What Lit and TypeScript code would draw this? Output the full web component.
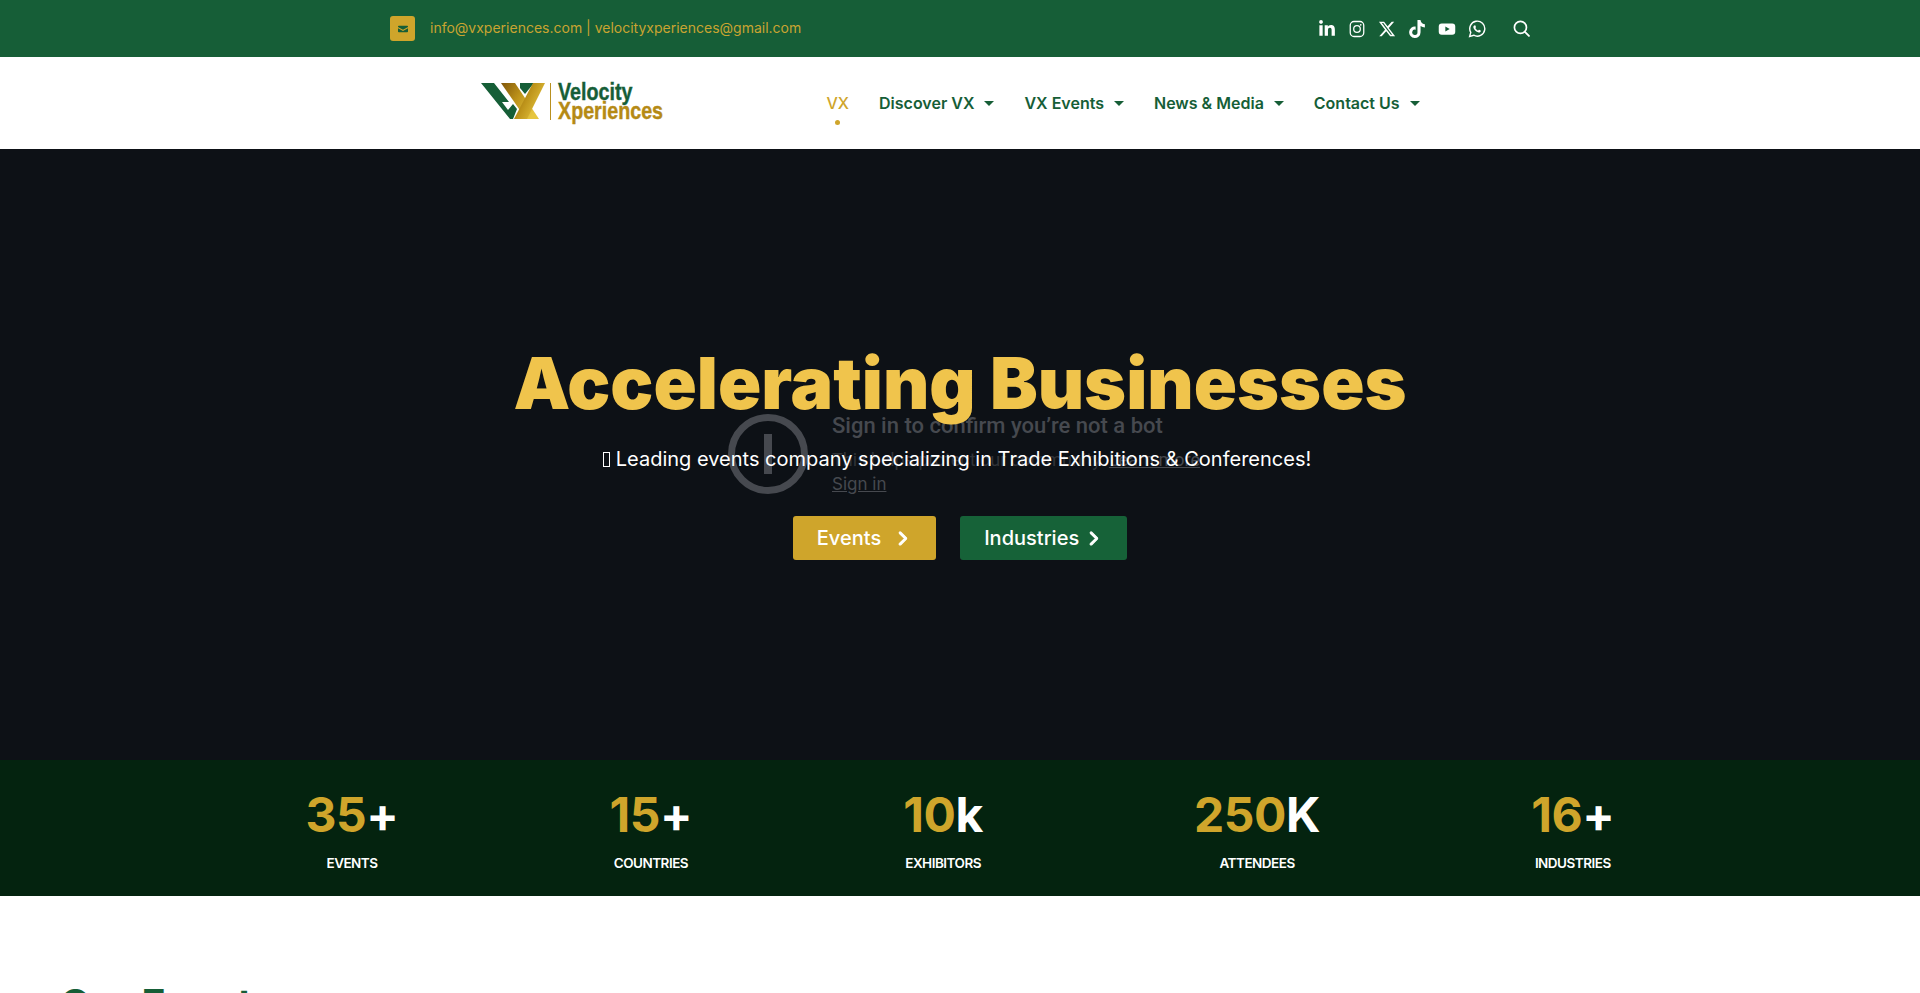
import { LitElement, html, css, svg } from "lit";
import { customElement } from "lit/decorators.js";

const ICONS = [
  { vb: "0 0 448 512", d: "M100.28 448H7.4V148.9h92.88zM53.79 108.1C24.09 108.1 0 83.5 0 53.8a53.79 53.79 0 0 1 107.58 0c0 29.7-24.1 54.3-53.79 54.3zM447.9 448h-92.68V302.4c0-34.7-.7-79.2-48.29-79.2-48.29 0-55.69 37.7-55.69 76.7V448h-92.78V148.9h89.08v40.8h1.3c12.4-23.5 42.69-48.3 87.88-48.3 94 0 111.28 61.9 111.28 142.3V448z" },
  { vb: "0 0 24 24", raw: svg`<rect x="3" y="2" width="18" height="20" rx="5" fill="none" stroke="currentColor" stroke-width="1.7"/><circle cx="12" cy="12" r="4.4" fill="none" stroke="currentColor" stroke-width="1.7"/><circle cx="17" cy="6.4" r="1.15" fill="currentColor"/>` },
  { vb: "0 0 512 512", d: "M389.2 48h70.6L305.6 224.2 487 464H345L233.7 318.6 106.5 464H35.8L200.7 275.5 26.8 48H172.4L272.9 180.9 389.2 48zM364.4 421.8h39.1L151.1 88h-42L364.4 421.8z" },
  { vb: "0 0 448 512", d: "M448,209.91a210.06,210.06,0,0,1-122.77-39.25V349.38A162.55,162.55,0,1,1,185,188.31V278.2a74.62,74.62,0,1,0,52.23,71.18V0l88,0a121.18,121.18,0,0,0,1.86,22.17h0A122.18,122.18,0,0,0,381,102.39a121.43,121.43,0,0,0,67,20.14Z" },
  { vb: "0 0 24 24", raw: svg`<path fill="currentColor" fill-rule="evenodd" d="M5 4.5h14a4 4 0 0 1 4 4v7a4 4 0 0 1-4 4H5a4 4 0 0 1-4-4v-7a4 4 0 0 1 4-4zM9.8 8.6v6.8l5.8-3.4z"/>` },
  { vb: "0 0 24 24", raw: svg`<path fill="none" stroke="currentColor" stroke-width="1.9" d="M2.2 21.8l1.5-5.3A10 10 0 1 1 7.6 20.3z"/><path fill="currentColor" d="M8.6 7.2c.4-.3 1-.3 1.2.2l.8 1.8c.1.3 0 .6-.2.8l-.7.8c.8 1.5 2 2.6 3.6 3.4l.9-1c.2-.3.5-.3.8-.2l1.8.9c.4.2.5.6.3 1-.5 1.2-1.5 1.9-2.8 1.7-3.6-.6-6.6-3.4-7.2-6.8-.2-1.2.5-2 1.5-2.6z"/>` },
];

const CHEV = svg`<path fill="currentColor" stroke="currentColor" stroke-width="36" d="M310.6 233.4c12.5 12.5 12.5 32.8 0 45.3l-192 192c-12.5 12.5-32.8 12.5-45.3 0s-12.5-32.8 0-45.3L242.7 256 73.4 86.6c-12.5-12.5-12.5-32.8 0-45.3s32.8-12.5 45.3 0l192 192z"/>`;

const NAV = ["Discover VX", "VX Events", "News & Media", "Contact Us"];
const STATS = [
  ["35", "+", "EVENTS"],
  ["15", "+", "COUNTRIES"],
  ["10", "k", "EXHIBITORS"],
  ["250", "K", "ATTENDEES"],
  ["16", "+", "INDUSTRIES"],
];

@customElement("app-root")
export class AppRoot extends LitElement {
  static styles = css`
    :host { display: block; height: 993px; overflow: hidden; background: #fff; font-family: Inter, "Liberation Sans", sans-serif; }
    .top { height: 57px; background: #165e37; display: flex; align-items: center; padding: 0 390px; box-sizing: border-box; }
    .mail { width: 25px; height: 25px; border-radius: 3px; background: #cfa52b; display: flex; align-items: center; justify-content: center; margin-right: 15px; }
    .mail svg { width: 10px; height: 10px; }
    .addr { font-size: 14px; line-height: 18px; color: #c9a431; flex: 1; margin-bottom: 2px; }
    .social { display: flex; gap: 12px; align-items: center; color: #fff; margin-right: 27px; }
    .social svg { width: 18px; height: 18px; display: block; }
    .search { width: 17px; height: 17px; color: #fff; display: block; }
    .nav { height: 92px; display: flex; align-items: center; box-sizing: border-box; padding-left: 481px; background: #fff; }
    .logo { display: flex; align-items: flex-start; width: 345.5px; height: 40px; }
    .logo svg { width: 64px; height: 37px; display: block; flex: none; }
    .rule { width: 1px; height: 37px; background: #b8901f; margin: 0 7px 0 5px; flex: none; }
    .wordmark { display: flex; flex-direction: column; font-family: "Liberation Sans", sans-serif; font-weight: 700; font-size: 24px; line-height: 19px; transform: scaleX(0.82); transform-origin: 0 0; -webkit-text-stroke: 0.4px currentColor; white-space: nowrap; margin-top: -1px; }
    .v { color: #165e37; }
    .x { color: #b58a14; }
    .menu { display: flex; align-items: center; gap: 30px; font-size: 16px; font-weight: 600; color: #165e37; }
    .item { display: flex; align-items: center; gap: 10px; position: relative; }
    .active { color: #cfa52b; font-weight: 500; }
    .active::after { content: ""; position: absolute; left: 50%; bottom: -12px; width: 5px; height: 5px; margin-left: -2.5px; border-radius: 50%; background: #cfa52b; }
    .caret { width: 0; height: 0; border-left: 5px solid transparent; border-right: 5px solid transparent; border-top: 5px solid #165e37; margin-top: 1px; }
    .hero { position: relative; height: 611px; background: #0d1116; display: flex; flex-direction: column; align-items: center; }
    .notice { position: absolute; left: 728px; top: 264px; display: flex; gap: 24px; color: #46494f; }
    .notice svg { width: 80px; height: 80px; flex: none; margin-top: 1px; }
    .ntitle { font: 500 22px/26px Roboto, sans-serif; }
    .nbody { font: 400 18px/24px Roboto, sans-serif; margin-top: 9px; color: #303338; }
    .nbody u, .nlink { color: #46494f; text-decoration: underline; }
    .nlink { font: 400 17px/24px Inter, sans-serif; }
    .content { position: relative; display: flex; flex-direction: column; align-items: center; padding-top: 190px; }
    h1 { margin: 0; font: 900 71.5px/88px Inter, sans-serif; color: #f0c44c; white-space: nowrap; }
    .sub { margin: 0 6px 0 0; font-size: 20px; line-height: 30px; color: #fff; margin-top: 17px; display: flex; align-items: center; }
    .tofu { width: 7px; height: 15px; box-sizing: border-box; border: 1px solid #fff; margin-right: 6px; flex: none; }
    .btns { display: flex; gap: 24px; margin-top: 42px; }
    .btn { height: 44px; box-sizing: border-box; border-radius: 3px; display: flex; align-items: center; font-size: 20px; font-weight: 500; color: #fff; padding: 0 28px 0 24px; }
    .btn svg { width: 12px; height: 15px; display: block; }
    .gold { background: #cfa52b; gap: 15px; }
    .green { background: #166238; gap: 8px; }
    .stats { height: 136px; background: #04230f; display: flex; justify-content: space-around; align-items: center; padding: 0 200px; box-sizing: border-box; }
    .stat { display: flex; flex-direction: column; align-items: center; }
    .num { font-size: 48px; line-height: 58px; font-weight: 700; color: #fff; letter-spacing: -0.4px; position: relative; top: 2px; }
    .num span { color: #cfa52b; }
    .label { font-size: 13.5px; line-height: 20px; font-weight: 600; color: #fff; margin-top: 11px; letter-spacing: -0.5px; }
    .events { padding: 84px 60px 0; }
    h2 { margin: 0; font-size: 40px; line-height: 48px; font-weight: 700; color: #165e37; }
  `;

  render() {
    return html`
      <div class="top">
        <div class="mail"><svg viewBox="0 0 24 24"><path fill="#165e37" d="M2 4h20a2 2 0 0 1 2 2v1l-12 7L0 7V6a2 2 0 0 1 2-2zm-2 6l12 7 12-7v8a2 2 0 0 1-2 2H2a2 2 0 0 1-2-2z"/></svg></div>
        <div class="addr">info@vxperiences.com | velocityxperiences@gmail.com</div>
        <div class="social">
          ${ICONS.map((i) => html`<svg viewBox=${i.vb}>${i.raw ?? svg`<path fill="currentColor" d=${i.d ?? ""}/>`}</svg>`)}
        </div>
        <svg class="search" viewBox="0 0 24 24"><circle cx="10.5" cy="10.5" r="8.5" fill="none" stroke="currentColor" stroke-width="2.4"/><path d="M16.8 16.8L22.5 22.5" stroke="currentColor" stroke-width="2.6" stroke-linecap="round"/></svg>
      </div>
      <div class="nav">
        <div class="logo">
          <svg viewBox="0 0 64 37">
            <defs>
              <linearGradient id="g1" x1="0" x2="1" y1="0" y2="0.6"><stop offset="0" stop-color="#80560a"/><stop offset=".5" stop-color="#bd931a"/><stop offset="1" stop-color="#e6c640"/></linearGradient>
            </defs>
            <path fill="#165e37" d="M0 0H13L28 19 21 19 27 27 32 21 36 26 32 36 29 36Z"/>
            <path fill="#165e37" d="M39 0H53L44 11 39 5Z"/>
            <path fill="url(#g1)" d="M20 0H34L58 36H45Z"/>
            <path fill="url(#g1)" d="M52 0H64L46 36H33Z"/>
          </svg>
          <div class="rule"></div>
          <div class="wordmark"><span class="v">Velocity</span><span class="x">Xperiences</span></div>
        </div>
        <div class="menu">
          <div class="item active">VX</div>
          ${NAV.map((n) => html`<div class="item">${n}<span class="caret"></span></div>`)}
        </div>
      </div>
      <div class="hero">
        <div class="notice">
          <svg viewBox="0 0 80 80"><circle cx="40" cy="40" r="36.5" fill="none" stroke="currentColor" stroke-width="7"/><rect x="36" y="20" width="8" height="40" fill="currentColor"/></svg>
          <div>
            <div class="ntitle">Sign in to confirm you’re not a bot</div>
            <div class="nbody">This helps protect our community. <u>Learn more</u></div>
            <div class="nlink">Sign in</div>
          </div>
        </div>
        <div class="content">
          <h1>Accelerating Businesses</h1>
          <p class="sub"><span class="tofu"></span>Leading events company specializing in Trade Exhibitions &amp; Conferences!</p>
          <div class="btns">
            <div class="btn gold">Events <svg viewBox="0 0 320 512">${CHEV}</svg></div>
            <div class="btn green">Industries <svg viewBox="0 0 320 512">${CHEV}</svg></div>
          </div>
        </div>
      </div>
      <div class="stats">
        ${STATS.map((s) => html`<div class="stat"><div class="num"><span>${s[0]}</span>${s[1]}</div><div class="label">${s[2]}</div></div>`)}
      </div>
      <div class="events"><h2>Our Events</h2></div>
    `;
  }
}
